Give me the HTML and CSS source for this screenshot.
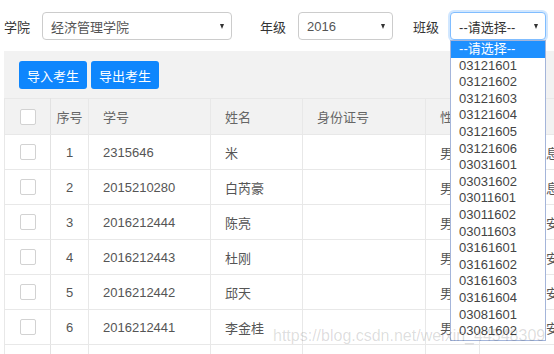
FILE: index.html
```html
<!doctype html>
<html>
<head>
  <meta charset="utf-8">
  <title>考生管理</title>
  <link rel="stylesheet" href="styles.css">
</head>
<body>

<div class="page">

  <div class="filters">
    <span class="filter-label">学院</span>
    <div class="select select-college">经济管理学院<span class="caret"></span></div>

    <span class="filter-label">年级</span>
    <div class="select select-grade">2016<span class="caret"></span></div>

    <span class="filter-label label-class">班级</span>
    <div class="select-wrap">
      <div class="select select-class is-focused">--请选择--<span class="caret"></span></div>
      <ul class="options">
        <li class="is-active">--请选择--</li>
        <li>03121601</li>
        <li>03121602</li>
        <li>03121603</li>
        <li>03121604</li>
        <li>03121605</li>
        <li>03121606</li>
        <li>03031601</li>
        <li>03031602</li>
        <li>03011601</li>
        <li>03011602</li>
        <li>03011603</li>
        <li>03161601</li>
        <li>03161602</li>
        <li>03161603</li>
        <li>03161604</li>
        <li>03081601</li>
        <li>03081602</li>
      </ul>
    </div>
  </div>

  <div class="panel">
    <div class="toolbar">
      <button class="btn">导入考生</button>
      <button class="btn">导出考生</button>
    </div>

    <table class="grid">
      <colgroup>
        <col class="c-check">
        <col class="c-no">
        <col class="c-id">
        <col class="c-name">
        <col class="c-card">
        <col class="c-sex">
        <col class="c-major">
      </colgroup>
      <thead>
        <tr>
          <th class="cell-check"><span class="check"></span></th>
          <th class="cell-no">序号</th>
          <th>学号</th>
          <th>姓名</th>
          <th>身份证号</th>
          <th>性别</th>
          <th>专业</th>
        </tr>
      </thead>
      <tbody>
        <tr>
          <td class="cell-check"><span class="check"></span></td>
          <td class="cell-no">1</td>
          <td>2315646</td>
          <td>米</td>
          <td></td>
          <td>男</td>
          <td>网络与信息安全</td>
        </tr>
        <tr>
          <td class="cell-check"><span class="check"></span></td>
          <td class="cell-no">2</td>
          <td>2015210280</td>
          <td>白芮豪</td>
          <td></td>
          <td>男</td>
          <td>网络与信息安全</td>
        </tr>
        <tr>
          <td class="cell-check"><span class="check"></span></td>
          <td class="cell-no">3</td>
          <td>2016212444</td>
          <td>陈亮</td>
          <td></td>
          <td>男</td>
          <td>网络空间安全</td>
        </tr>
        <tr>
          <td class="cell-check"><span class="check"></span></td>
          <td class="cell-no">4</td>
          <td>2016212443</td>
          <td>杜刚</td>
          <td></td>
          <td>男</td>
          <td>网络空间安全</td>
        </tr>
        <tr>
          <td class="cell-check"><span class="check"></span></td>
          <td class="cell-no">5</td>
          <td>2016212442</td>
          <td>邱天</td>
          <td></td>
          <td>男</td>
          <td>网络空间安全</td>
        </tr>
        <tr>
          <td class="cell-check"><span class="check"></span></td>
          <td class="cell-no">6</td>
          <td>2016212441</td>
          <td>李金桂</td>
          <td></td>
          <td>男</td>
          <td>网络空间安全</td>
        </tr>
        <tr>
          <td class="cell-check"><span class="check"></span></td>
          <td class="cell-no">7</td>
          <td>2016212440</td>
          <td>王磊</td>
          <td></td>
          <td>男</td>
          <td>网络空间安全</td>
        </tr>
      </tbody>
    </table>
  </div>

  <div class="watermark">https://blog.csdn.net/weixin_44548309</div>

</div>

</body>
</html>
```

FILE: styles.css
```css
body {
  margin: 0;
  font-family: "Liberation Sans", "Noto Sans CJK SC", sans-serif;
  font-size: 13px;
  color: #333;
  background: #fff;
}

.page {
  position: relative;
  width: 554px;
  height: 354px;
  overflow: hidden;
}

/* filter bar */
.filters {
  display: flex;
  align-items: center;
  height: 28px;
  padding: 12px 0 0 4px;
}

.filter-label {
  margin-right: 12px;
}

.label-class {
  margin-right: 11px;
}

.select {
  box-sizing: border-box;
  height: 28px;
  display: flex;
  align-items: center;
  justify-content: space-between;
  padding: 0 7px 0 8px;
  border: 1px solid #ccc;
  border-radius: 4px;
  background: #fff;
  color: #555;
}

.select-college {
  width: 190px;
  margin-right: 28px;
}

.select-grade {
  width: 95px;
  margin-right: 20px;
}

.select-class {
  width: 96px;
  color: #333;
}

.select.is-focused {
  border-color: #80bdff;
  box-shadow: 0 0 0 2px rgba(0, 123, 255, 0.18);
}

.caret {
  width: 0;
  height: 0;
  border-left: 2.5px solid transparent;
  border-right: 2.5px solid transparent;
  border-top: 5px solid #333;
}

.select-wrap {
  position: relative;
}

/* open list of the class select */
.options {
  position: absolute;
  top: 100%;
  left: 0;
  z-index: 3;
  box-sizing: border-box;
  width: 96px;
  margin: 0;
  padding: 0;
  list-style: none;
  border: 1px solid #a4b5da;
  background: #fff;
}

.options li {
  height: 16.6px;
  line-height: 16.6px;
  padding-left: 8px;
  color: #444;
  white-space: nowrap;
}

.options li.is-active {
  background: #1e90ff;
  color: #fff;
}

/* table panel */
.panel {
  margin: 11px 0 0 4px;
  padding-top: 10px;
  background: #f2f2f2;
  height: 400px;
}

.toolbar {
  display: flex;
  gap: 4px;
  padding-left: 15px;
  margin-bottom: 9px;
}

.btn {
  height: 28px;
  padding: 0 8px;
  border: 0;
  border-radius: 3px;
  background: #0e86fd;
  color: #fff;
  font-family: inherit;
  font-size: 13px;
}

.grid {
  table-layout: fixed;
  width: 640px;
  border-collapse: collapse;
  background: #fff;
}

.c-check { width: 46px; }
.c-no { width: 38px; }
.c-id { width: 122px; }
.c-name { width: 92px; }
.c-card { width: 123px; }
.c-sex { width: 54px; }
.c-major { width: 165px; }

.grid th,
.grid td {
  padding: 0 0 0 14px;
  border: 1px solid #e8e8e8;
  text-align: left;
  white-space: nowrap;
  overflow: hidden;
}

.grid th {
  height: 35px;
  background: #f2f2f2;
  font-weight: normal;
  color: #666;
}

.grid td {
  height: 34px;
  color: #555;
}

.grid .cell-check {
  position: relative;
  padding: 0;
  text-align: center;
  border-right-color: #e2e2e2;
  box-shadow: 2px 0 3px rgba(0, 0, 0, 0.06);
}

.grid .cell-no {
  padding: 0;
  text-align: center;
}

.check {
  display: inline-block;
  box-sizing: border-box;
  width: 16px;
  height: 16px;
  vertical-align: middle;
  border: 1px solid #d2d2d2;
  border-radius: 2px;
  background: #fff;
}

.watermark {
  position: absolute;
  left: 273px;
  top: 327px;
  z-index: 5;
  font-size: 16px;
  color: rgba(0, 0, 0, 0.14);
  white-space: nowrap;
  pointer-events: none;
}
```
